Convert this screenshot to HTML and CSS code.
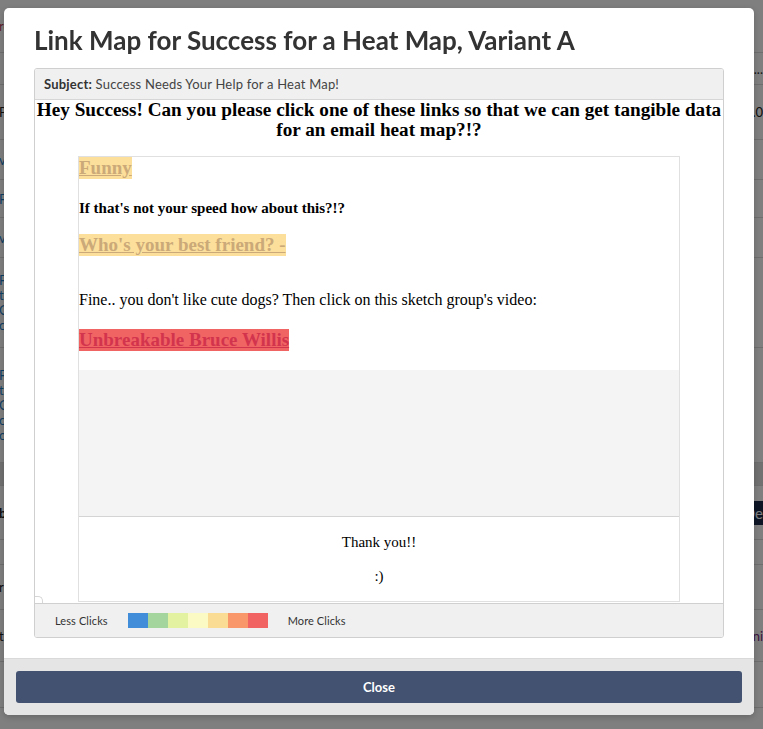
FILE: index.html
```html
<!DOCTYPE html>
<html>
<head>
<meta charset="utf-8">
<title>Link Map</title>
<link rel="stylesheet" href="styles.css">
</head>
<body>
<div class="page">
  <div class="bg-row h53"><span class="bl red">reply</span><span class="br"></span></div>
  <div class="bg-row h32"><span class="bl"></span><span class="br">...</span></div>
  <div class="bg-row h55"><span class="bl dark">Pa</span><span class="br dark">0.0</span></div>
  <div class="bg-row h40"><span class="bl blue">v</span></div>
  <div class="bg-row h38"><span class="bl blue">F</span></div>
  <div class="bg-row h40"><span class="bl blue">v</span></div>
  <div class="bg-row h90 multi"><span class="bl blue">F<br>t<br>C<br>c</span></div>
  <div class="bg-row h115 multi"><span class="bl blue">F<br>t<br>C<br>c<br>o</span></div>
  <div class="bg-band"></div>
  <div class="bg-row h54"><span class="bl dark bold">b</span><span class="br"><span class="bg-btn">De</span></span></div>
  <div class="bg-row h25"></div>
  <div class="bg-row h45"><span class="bl dark">ri</span></div>
  <div class="bg-row h52"><span class="bl dark">t</span><span class="br purple">ni</span></div>
  <div class="bg-row h46"></div>
</div>
<div class="overlay"></div>

<div class="modal">
  <div class="modal-body">
    <h1 class="modal-title">Link Map for Success for a Heat Map, Variant A</h1>
    <div class="preview">
      <div class="subject"><b>Subject:</b> Success Needs Your Help for a Heat Map!</div>
      <div class="email">
        <h2 class="email-heading">Hey Success! Can you please click one of these links so that we can get tangible data for an email heat map?!?</h2>
        <div class="email-table">
          <div class="email-main">
            <p class="link-row"><a class="hm hm-yellow">Funny</a></p>
            <p class="bold-line">If that's not your speed how about this?!?</p>
            <p class="link-row gap17"><a class="hm hm-yellow">Who's your best friend? -</a></p>
            <p class="plain">Fine.. you don't like cute dogs? Then click on this sketch group's video:</p>
            <p class="link-row"><a class="hm hm-red">Unbreakable Bruce Willis</a></p>
          </div>
          <div class="email-grey"></div>
          <div class="email-foot">
            <p>Thank you!!</p>
            <p>:)</p>
          </div>
        </div>
        <span class="corner"></span>
      </div>
      <div class="legend">
        <span class="legend-label">Less Clicks</span>
        <div class="swatches">
          <span class="sw s1"></span><span class="sw s2"></span><span class="sw s3"></span><span class="sw s4"></span><span class="sw s5"></span><span class="sw s6"></span><span class="sw s7"></span>
        </div>
        <span class="legend-label">More Clicks</span>
      </div>
    </div>
  </div>
  <div class="modal-footer">
    <button class="close-btn">Close</button>
  </div>
</div>
</body>
</html>
```

FILE: styles.css
```css
* { box-sizing: border-box; }

html, body {
  margin: 0;
  padding: 0;
  height: 100%;
  overflow: hidden;
}

body {
  background: #ffffff;
  font-family: "Lato", "Open Sans", sans-serif;
  position: relative;
}

/* ---- background page ---- */
.page {
  width: 100%;
  font-size: 13px;
  color: #333;
}
.bg-row {
  display: flex;
  justify-content: space-between;
  align-items: center;
  border-bottom: 1px solid #dcdcdc;
}
.bg-row.multi { line-height: 15px; }
.h25 { height: 25px; }
.h32 { height: 32px; }
.h38 { height: 38px; }
.h40 { height: 40px; }
.h45 { height: 45px; }
.h46 { height: 46px; }
.h52 { height: 52px; }
.h53 { height: 53px; }
.h54 { height: 54px; }
.h55 { height: 55px; }
.h90 { height: 90px; }
.h115 { height: 115px; }
.bl { margin-left: -1px; }
.red { color: #c0475a; }
.blue { color: #1f7fc8; }
.dark { color: #222; }
.purple { color: #7b2d7d; }
.bold { font-weight: 700; }
.bg-band { height: 23px; background: #e2e2e2; border-bottom: 1px solid #dcdcdc; }
.bg-btn {
  display: inline-block;
  height: 24px;
  line-height: 24px;
  background: #1a2b4a;
  color: #fff;
  padding: 0 10px 0 3px;
  margin-right: -10px;
  font-size: 15px;
}

.overlay {
  position: fixed;
  inset: 0;
  background: rgba(0, 0, 0, 0.5);
}

/* ---- modal ---- */
.modal {
  position: absolute;
  top: 8px;
  left: 4px;
  width: 750px;
  height: 707px;
  background: #fff;
  border-radius: 5px;
  overflow: hidden;
  display: flex;
  flex-direction: column;
  box-shadow: 0 2px 6px rgba(0,0,0,0.2);
}

.modal-body {
  padding: 16px 30px 20px;
}

.modal-title {
  margin: 0 0 12px;
  font-family: "Lato", sans-serif;
  font-weight: 700;
  font-size: 26px;
  line-height: 32px;
  color: #333;
}

.preview {
  border: 1px solid #cfcfcf;
  border-radius: 3px;
  overflow: hidden;
  display: flex;
  flex-direction: column;
}

.subject {
  height: 31px;
  background: #f0f0f0;
  border-bottom: 1px solid #d6d6d6;
  padding: 0 9px;
  font-family: "Lato", sans-serif;
  font-size: 13px;
  letter-spacing: 0.2px;
  line-height: 31px;
  color: #444;
}
.subject b { font-weight: 700; color: #333; }

.email {
  position: relative;
  height: 503px;
  overflow: hidden;
  background: #fff;
  font-family: "Liberation Serif", "Times New Roman", serif;
  color: #000;
}

.email-heading {
  margin: 0 0 16px;
  font-family: "Liberation Serif", serif;
  font-weight: 700;
  font-size: 19.2px;
  line-height: 20px;
  text-align: center;
}

.email-table {
  width: 602px;
  margin: 0 auto;
  border: 1px solid #e0e0e0;
}

.email-main {
  padding: 0 0 19px;
}
.email-main p { margin: 0; }

.link-row { line-height: 22px; height: 22px; }
.hm {
  display: inline-block;
  height: 22px;
  line-height: 22px;
  font-size: 19px;
  font-weight: 700;
  text-decoration: underline;
}
.hm-yellow { background: #fcdf9a; color: #cba978; }
.hm-red { background: #f16464; color: #d3344d; }

.bold-line {
  margin-top: 20px !important;
  font-weight: 700;
  font-size: 15px;
  line-height: 18px;
}
.gap17 { margin-top: 17px !important; }
.plain {
  margin-top: 35px !important;
  margin-bottom: 20px !important;
  font-size: 16px;
  line-height: 18px;
}

.email-grey {
  height: 147px;
  background: #f4f4f4;
  border-bottom: 1px solid #d4d4d4;
}

.email-foot {
  padding: 16px 0;
  text-align: center;
  font-size: 15px;
  line-height: 18px;
}
.email-foot p { margin: 0; }
.email-foot p + p { margin-top: 16px; }

.corner {
  position: absolute;
  left: 0;
  bottom: 0;
  width: 8px;
  height: 7px;
  border-top: 1px solid #d6d6d6;
  border-right: 1px solid #d6d6d6;
  border-top-right-radius: 5px;
  background: #fff;
}

.legend {
  height: 34px;
  border-top: 1px solid #d0d0d0;
  background: #f0f0f0;
  display: flex;
  align-items: center;
  gap: 20px;
  padding-left: 20px;
  font-family: "Lato", sans-serif;
  font-size: 11px;
  letter-spacing: 0.1px;
  color: #333;
}
.swatches { display: flex; }
.sw { width: 20px; height: 15px; display: block; }
.s1 { background: #418dd9; }
.s2 { background: #a3d59d; }
.s3 { background: #e3f2a0; }
.s4 { background: #fbf9c4; }
.s5 { background: #fbdc95; }
.s6 { background: #f9976b; }
.s7 { background: #f16262; }

.modal-footer {
  flex: 1;
  background: #e5e5e5;
  border-top: 1px solid #d9d9d9;
  padding: 12px;
}

.close-btn {
  display: block;
  width: 100%;
  height: 32px;
  border: 0;
  border-radius: 3px;
  background: #425270;
  color: #fff;
  font-family: "Lato", sans-serif;
  font-weight: 700;
  font-size: 13px;
  cursor: pointer;
}
```
